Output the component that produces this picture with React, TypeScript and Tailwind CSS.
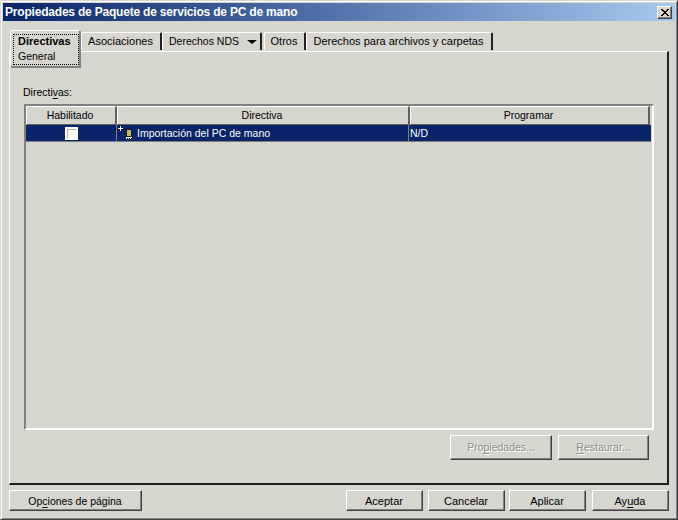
const raised =
  'border border-t-white border-l-white border-r-[#404040] border-b-[#404040] shadow-[inset_-1px_-1px_0_#808080]';

function Underlined({ before, letter, after }: { before: string; letter: string; after: string }) {
  return (
    <span>
      {before}
      <span className="underline underline-offset-2">{letter}</span>
      {after}
    </span>
  );
}

function Tab({ label, width, arrow, gap }: { label: string; width: string; arrow?: boolean; gap?: boolean }) {
  return (
    <div className={`${width} ${gap ? 'ml-[2px]' : ''} ${arrow ? 'pl-[3px] text-[10.5px]' : 'pr-[1px]'} h-[18px] mt-[2px] flex items-center justify-center gap-[8px] border-t border-l border-t-white border-l-white border-r-2 border-r-[#202020] rounded-tl-[2px] rounded-tr-[2px]`}>
      <span>{label}</span>
      {arrow && <span className="w-0 h-0 border-x-[5px] border-x-transparent border-t-[4px] border-t-black mt-[1px]" />}
    </div>
  );
}

function Btn({ width, height, children, disabled }: { width: string; height: string; children: React.ReactNode; disabled?: boolean }) {
  return (
    <button
      className={`${width} ${height} flex items-center justify-center ${raised} ${disabled ? 'text-[#8c8c88] [text-shadow:1px_1px_0_#fff]' : 'text-black pt-[1px] pr-[1px]'}`}
    >
      {children}
    </button>
  );
}

function HeaderCell({ width, label }: { width: string; label: string }) {
  return (
    <div className={`${width} h-[19px] flex items-center justify-center border-t border-l border-t-white border-l-white border-r-2 border-r-[#606060] border-b border-b-[#606060] pr-[2px]`}>
      {label}
    </div>
  );
}

export default function App() {
  return (
    <div className="w-[678px] h-[520px] bg-[#d6d5ce] border border-t-[#d6d5ce] border-l-[#d6d5ce] border-r-[#404040] border-b-[#404040] shadow-[inset_1px_1px_0_#fff,inset_-1px_-1px_0_#808080] p-[2px] flex flex-col font-['Liberation_Sans',Arial,sans-serif] text-[10.5px] leading-none text-black overflow-hidden">
      {/* title bar */}
      <div className="h-[18px] flex items-center justify-between pl-[2px] pr-[3px] bg-gradient-to-r from-[#0a246a] to-[#a6caf0] shrink-0">
        <span className="font-bold text-[12px] tracking-[-0.2px] text-white">Propiedades de Paquete de servicios de PC de mano</span>
        <div className={`w-[15px] h-[13px] bg-[#d6d5ce] flex items-center justify-center ${raised}`}>
          <svg width="8" height="7" viewBox="0 0 8 7" shapeRendering="crispEdges">
            <path d="M0 0h2v1h1v1h2V1h1V0h2v1H7v1H6v1H5v1h1v1h1v1h1v1H6V6H5V5H3v1H2v1H0V6h1V5h1V4h1V3H2V2H1V1H0z" fill="#000" />
          </svg>
        </div>
      </div>

      {/* tabs */}
      <div className="flex items-start h-[30px] pt-[9px] pl-[7px] shrink-0 relative z-10 text-[11px]">
        <div className="w-[71px] h-[38px] bg-[#d6d5ce] border-t border-l border-t-white border-l-white border-r-2 border-b-2 border-r-[#808080] border-b-[#808080] rounded-tl-[3px] rounded-tr-[3px] rounded-bl-[3px] pt-[3px] pl-[2px] pb-[1px]">
          <div className="h-full border border-dotted border-black pl-[4px] pb-[2px] flex flex-col justify-center gap-[4px]">
            <span className="font-bold">Directivas</span>
            <span className="text-[10.5px]">General</span>
          </div>
        </div>
        <Tab label="Asociaciones" width="w-[81px]" />
        <Tab label="Derechos NDS" width="w-[100px]" arrow />
        <Tab label="Otros" width="w-[42px]" gap />
        <Tab label="Derechos para archivos y carpetas" width="w-[187px]" />
      </div>

      {/* panel */}
      <div className="h-[434px] ml-[6px] mr-[6px] border-t border-l border-t-white border-l-white border-r-2 border-r-[#202020] border-b-2 border-b-[#202020] pt-[35px] pl-[14px] pr-[13px] flex flex-col shrink-0">
        <div className="h-[14px] -ml-[1px]">
          <Underlined before="Directi" letter="v" after="as:" />
        </div>
        <div className="mt-[3px] h-[326px] border-t-2 border-l-2 border-t-[#808080] border-l-[#808080] border-r-2 border-b-2 border-r-white border-b-white">
          <div className="flex">
            <HeaderCell width="w-[91px]" label="Habilitado" />
            <HeaderCell width="w-[293px]" label="Directiva" />
            <HeaderCell width="w-[240px]" label="Programar" />
          </div>
          <div className="flex h-[16px] mr-[1px] bg-[#0a246a] text-white border-b border-b-[#808080] box-content">
            <div className="w-[91px] flex items-center justify-center border-r border-r-[#808080]">
              <div className="w-[13px] h-[13px] bg-white border-2 border-white shadow-[inset_1px_1px_0_#b0b0b0]" />
            </div>
            <div className="w-[292px] flex items-center border-r border-r-[#808080]">
              <svg width="17" height="16" viewBox="0 0 17 16" shapeRendering="crispEdges" className="shrink-0">
                <path d="M3 1h1v2h2v1H4v2H3V4H1V3h2z" fill="#fff" />
                <path d="M0 3h1v1H0zM2 1h1v2H2zM2 4h1v2H2zM4 4h2v1H4z" fill="#000" />
                <rect x="9" y="4" width="6" height="8" fill="#1a1a10" />
                <rect x="10" y="5" width="4" height="6" fill="#b8b878" />
                <rect x="9" y="12" width="6" height="2" fill="#fff" />
                <rect x="10" y="13" width="1" height="1" fill="#000" />
                <rect x="12" y="13" width="1" height="1" fill="#000" />
                <rect x="14" y="13" width="1" height="1" fill="#000" />
              </svg>
              <span className="ml-[3px] pt-[1px]">Importación del PC de mano</span>
            </div>
            <div className="flex-1 flex items-center pl-[1px] pt-[1px]">N/D</div>
          </div>
        </div>
        <div className="mt-[5px] flex justify-end gap-[6px] pr-[5px]">
          <Btn width="w-[102px]" height="h-[25px]" disabled>
            <Underlined before="Pro" letter="p" after="iedades..." />
          </Btn>
          <Btn width="w-[91px]" height="h-[25px]" disabled>
            <Underlined before="" letter="R" after="estaurar..." />
          </Btn>
        </div>
      </div>

      {/* bottom buttons */}
      <div className="flex mt-[5px] ml-[6px] mr-[6px] shrink-0 text-[11px]">
        <Btn width="w-[133px]" height="h-[21px]">
          <span className="text-[10.5px]">
            <Underlined before="Op" letter="c" after="iones de página" />
          </span>
        </Btn>
        <div className="ml-auto flex">
          <Btn width="w-[77px]" height="h-[21px]">Aceptar</Btn>
          <div className="ml-[5px]">
            <Btn width="w-[77px]" height="h-[21px]">Cancelar</Btn>
          </div>
          <div className="ml-[4px]">
            <Btn width="w-[77px]" height="h-[21px]">Aplicar</Btn>
          </div>
          <div className="ml-[6px]">
            <Btn width="w-[77px]" height="h-[21px]">
              <Underlined before="Ay" letter="u" after="da" />
            </Btn>
          </div>
        </div>
      </div>
    </div>
  );
}
